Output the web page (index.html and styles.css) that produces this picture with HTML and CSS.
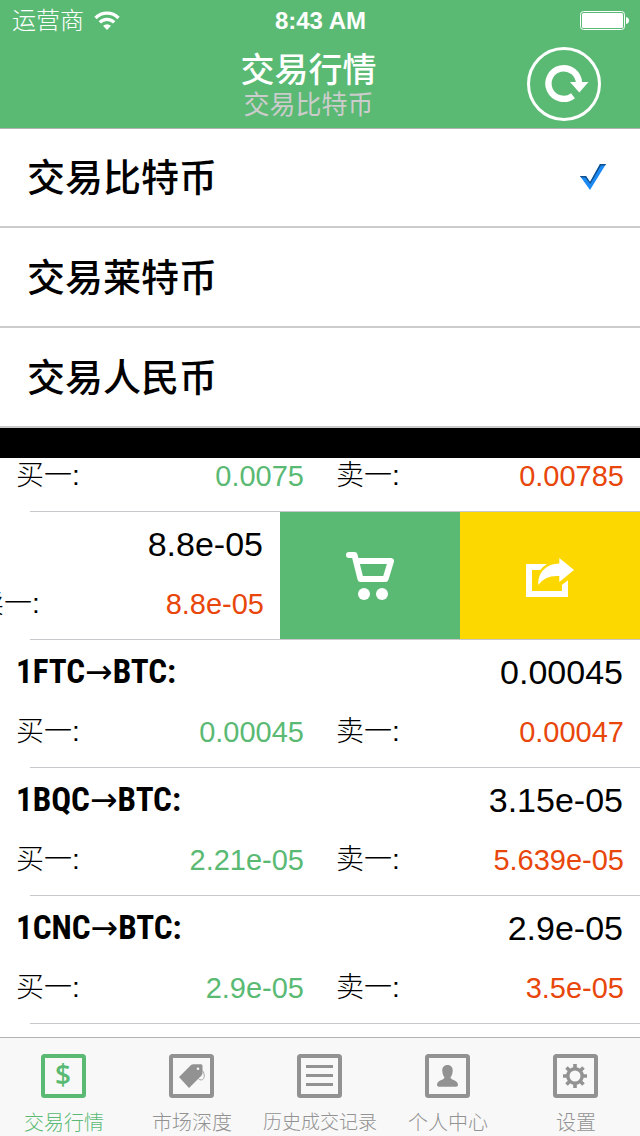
FILE: index.html
```html
<!DOCTYPE html>
<html lang="zh-CN">
<head>
<meta charset="utf-8">
<meta name="viewport" content="width=device-width, initial-scale=1">
<title>交易行情</title>
<link rel="stylesheet" href="styles.css">
</head>
<body>
<header class="header">
  <div class="status">
    <div class="carrier">
      <span>运营商</span>
      <svg class="wifi" viewBox="0 0 26 20" aria-hidden="true">
        <path d="M1.5 7A16 16 0 0 1 24.5 7M5.8 11.4A10 10 0 0 1 20.200 11.400" fill="none" stroke="currentColor" stroke-width="3.300"/>
        <path d="M9 14.800Q13 11.500 17 14.800L13 19Z" fill="currentColor"/>
      </svg>
    </div>
    <span class="clock">8:43 AM</span>
    <svg class="battery" viewBox="0 0 49 19" aria-hidden="true">
      <rect x=".5" y=".5" width="44" height="18" rx="3" fill="none" stroke="currentColor"/>
      <rect x="2" y="2" width="41" height="15" rx="1.500" fill="currentColor"/>
      <path d="M46 6Q49 6.500 49 9.500T46 13Z" fill="currentColor"/>
    </svg>
  </div>
  <div class="nav">
    <div class="titles">
      <h1 class="title">交易行情</h1>
      <p class="subtitle">交易比特币</p>
    </div>
    <button class="refresh" type="button" aria-label="刷新">
      <svg viewBox="0 0 74 74" aria-hidden="true">
        <circle cx="37" cy="37" r="35.500" fill="none" stroke="currentColor" stroke-width="3"/>
        <path d="M46 48.700A15.300 15.300 0 1 1 52 36.500" fill="none" stroke="currentColor" stroke-width="6.400"/>
        <path d="M43 35H61.500L52.300 45.500Z" fill="currentColor"/>
      </svg>
    </button>
  </div>
</header>

<nav class="menu">
  <button class="option" type="button" aria-pressed="true">
    <span>交易比特币</span>
    <svg class="check" viewBox="0 0 26 26" aria-hidden="true">
      <path d="M0 12H6L10 18 20 0H26L10 26Z" fill="#1b8af5"/>
      <path d="M0 12H6L10 18 20 0H26L25 1.600H21L10.300 20 5.300 13.500H1Z" fill="#124f8c"/>
    </svg>
  </button>
  <button class="option" type="button" aria-pressed="false"><span>交易莱特币</span></button>
  <button class="option" type="button" aria-pressed="false"><span>交易人民币</span></button>
</nav>

<main class="market">
  <ul class="ticks">
    <li class="tick">
      <div class="quotes">
        <div class="quote"><span>买一:</span><span class="buy">0.0075</span></div>
        <div class="quote"><span>卖一:</span><span class="sell">0.00785</span></div>
      </div>
    </li>
    <li class="tick">
      <div class="swipe">
        <div class="card">
          <div class="pair"><span class="price">8.8e-05</span></div>
          <div class="quotes">
            <div class="quote"></div>
            <div class="quote"><span>卖一:</span><span class="sell">8.8e-05</span></div>
          </div>
        </div>
        <button class="action cart" type="button" aria-label="购买">
          <svg viewBox="0 0 48 48" aria-hidden="true">
            <path d="M3 3H8.500L14.500 27H39.500L45 9H10.500" fill="none" stroke="currentColor" stroke-width="6" stroke-linecap="round" stroke-linejoin="round"/>
            <circle cx="18" cy="42" r="6" fill="currentColor"/>
            <circle cx="36" cy="42" r="6" fill="currentColor"/>
          </svg>
        </button>
        <button class="action share" type="button" aria-label="分享">
          <svg viewBox="0 -6 48 48" aria-hidden="true">
            <path d="M21 6H0V39H42V22.300L36 26.700V33H6V12H14.300Q17 8.500 21 6Z" fill="currentColor"/>
            <path d="M33.300 0L48 12 33.300 24V18Q19 17 12.300 27C11.500 15 20 5.700 33.300 5.500Z" fill="currentColor"/>
          </svg>
        </button>
      </div>
    </li>
    <li class="tick">
      <div class="card">
        <div class="pair"><h2 class="name">1FTC<span class="arrow">→</span>BTC:</h2><span class="price">0.00045</span></div>
        <div class="quotes">
          <div class="quote"><span>买一:</span><span class="buy">0.00045</span></div>
          <div class="quote"><span>卖一:</span><span class="sell">0.00047</span></div>
        </div>
      </div>
    </li>
    <li class="tick">
      <div class="card">
        <div class="pair"><h2 class="name">1BQC<span class="arrow">→</span>BTC:</h2><span class="price">3.15e-05</span></div>
        <div class="quotes">
          <div class="quote"><span>买一:</span><span class="buy">2.21e-05</span></div>
          <div class="quote"><span>卖一:</span><span class="sell">5.639e-05</span></div>
        </div>
      </div>
    </li>
    <li class="tick">
      <div class="card">
        <div class="pair"><h2 class="name">1CNC<span class="arrow">→</span>BTC:</h2><span class="price">2.9e-05</span></div>
        <div class="quotes">
          <div class="quote"><span>买一:</span><span class="buy">2.9e-05</span></div>
          <div class="quote"><span>卖一:</span><span class="sell">3.5e-05</span></div>
        </div>
      </div>
    </li>
  </ul>
</main>

<nav class="tabs">
  <button class="tab active" type="button">
    <svg class="icon" viewBox="0 0 46 44" aria-hidden="true">
      <rect x="2" y="2" width="41" height="40" rx="1.500" fill="none" stroke="currentColor" stroke-width="4"/>
      <text class="dollar" x="22" y="31" text-anchor="middle" fill="currentColor">$</text>
    </svg>
    <span>交易行情</span>
  </button>
  <button class="tab" type="button">
    <svg class="icon" viewBox="0 0 46 44" aria-hidden="true">
      <rect x="2" y="2" width="41" height="40" rx="1.500" fill="none" stroke="currentColor" stroke-width="4"/>
      <path fill-rule="evenodd" d="M10 23L22 11Q23 10.300 24.500 10.300H32Q33.500 10.300 33.500 12V19Q33.500 20.500 32.500 21.500L20 34ZM29 13.500A1.300 1.300 0 1 0 29 16.100A1.300 1.300 0 1 0 29 13.500Z" fill="currentColor"/>
      <path d="M33.500 16.500C36 20 36 25 32.500 26Q30 26 29.500 24.500" fill="none" stroke="currentColor" stroke-width=".8"/>
    </svg>
    <span>市场深度</span>
  </button>
  <button class="tab" type="button">
    <svg class="icon" viewBox="0 0 46 44" aria-hidden="true">
      <rect x="2" y="2" width="41" height="40" rx="1.500" fill="none" stroke="currentColor" stroke-width="4"/>
      <path d="M9 12.500H36M9 21.500H36M9 30.500H36" stroke="currentColor" stroke-width="3"/>
    </svg>
    <span class="long">历史成交记录</span>
  </button>
  <button class="tab" type="button">
    <svg class="icon" viewBox="0 0 46 44" aria-hidden="true">
      <rect x="2" y="2" width="41" height="40" rx="1.500" fill="none" stroke="currentColor" stroke-width="4"/>
      <path d="M22.500 11C26 11 28 13.500 27.700 17C27.500 20.500 26.500 22 25.500 23.500C25.500 26 33 26 33 31Q33 32.800 30 32.800H15Q12 32.800 12 31C12 26 19.500 26 19.500 23.500C18.500 22 17.500 20.500 17.300 17C17 13.500 19 11 22.500 11Z" fill="currentColor"/>
    </svg>
    <span>个人中心</span>
  </button>
  <button class="tab" type="button">
    <svg class="icon" viewBox="0 0 46 44" aria-hidden="true">
      <rect x="2" y="2" width="41" height="40" rx="1.500" fill="none" stroke="currentColor" stroke-width="4"/>
      <circle cx="22" cy="22" r="7.200" fill="none" stroke="currentColor" stroke-width="3.400"/>
      <path d="M22 10V14M22 30V34M10 22H14M30 22H34M13.500 13.500L16.500 16.500M27.500 27.500L30.500 30.500M30.500 13.500L27.500 16.500M16.500 27.500L13.500 30.500" stroke="currentColor" stroke-width="3.600"/>
    </svg>
    <span>设置</span>
  </button>
</nav>
</body>
</html>
```

FILE: styles.css
```css
* {
  box-sizing: border-box;
}

body {
  margin: 0;
  min-height: 100vh;
  display: flex;
  flex-direction: column;
  overflow-x: hidden;
  background: #fff;
  color: #000;
  font-family: "Liberation Sans", "Noto Sans CJK SC", sans-serif;
}

h1, h2, p, ul {
  margin: 0;
  padding: 0;
}

button {
  margin: 0;
  padding: 0;
  border: 0;
  border-radius: 0;
  background: none;
  color: inherit;
  font: inherit;
}

svg {
  display: block;
}

.header {
  background: #5aba74;
  color: #fff;
}

.status {
  height: 40px;
  padding: 0 11px 0 12px;
  display: grid;
  grid-template-columns: 1fr auto 1fr;
  align-items: center;
  font-size: 24px;
  line-height: 40px;
}

.carrier {
  padding-top: 1px;
  display: flex;
  align-items: center;
  gap: 10px;
  font-weight: 300;
}

.wifi {
  width: 26px;
  height: 20px;
}

.clock {
  font-weight: 700;
}

.battery {
  width: 49px;
  height: 19px;
  justify-self: end;
}

.nav {
  height: 88px;
  padding: 0 39px 0 16px;
  display: grid;
  grid-template-columns: 1fr auto 1fr;
  align-items: center;
}

.titles {
  padding-top: 2px;
  grid-column: 2;
  text-align: center;
}

.title {
  font-size: 34px;
  line-height: 40px;
  font-weight: 500;
}

.subtitle {
  color: #ccc;
  font-size: 26px;
  line-height: 30px;
}

.refresh {
  width: 74px;
  height: 74px;
  justify-self: end;
}

.menu {
  display: flex;
  flex-direction: column;
  box-shadow: inset 0 1px #b2b2b2;
  border-bottom: 30px solid #000;
}

.option {
  padding: 20px 34px 20px 27px;
  display: flex;
  justify-content: space-between;
  align-items: center;
  border-bottom: 2px solid #ccc;
  font-size: 38px;
  line-height: 56px;
  font-weight: 500;
}

.option span {
  padding-top: 2px;
}

.check {
  width: 26px;
  height: 26px;
}

.market {
  flex: 1;
  overflow: hidden;
}

.ticks {
  list-style: none;
}

.tick::after {
  content: "";
  display: block;
  height: 1px;
  margin-left: 30px;
  background: #c8c7cc;
}

.card {
  padding-top: 12px;
}

.pair {
  padding: 0 17px 22px 16px;
  display: flex;
  align-items: center;
  font-size: 34px;
  line-height: 40px;
}

.name {
  font-family: "Roboto Condensed", "Liberation Sans", sans-serif;
  font-size: 33px;
  font-weight: 700;
}

.arrow {
  font-family: "DejaVu Sans", sans-serif;
  font-weight: 400;
}

.price {
  margin-left: auto;
}

.quotes {
  padding: 1px 0 18px;
  display: grid;
  grid-template-columns: 1fr 1fr;
  font-size: 28px;
  line-height: 34px;
  font-weight: 300;
}

.quote {
  height: 34px;
  padding: 0 16px;
  display: flex;
  justify-content: space-between;
}

.buy,
.sell {
  font-size: 29px;
}

.buy {
  color: #5aba74;
}

.sell {
  color: #e8460a;
}

.swipe {
  display: flex;
  justify-content: flex-end;
}

.swipe .card {
  flex: 0 0 100%;
}

.action {
  flex: 0 0 180px;
  display: flex;
  justify-content: center;
  align-items: center;
  color: #fff;
}

.action svg {
  width: 48px;
  height: 48px;
}

.cart {
  background: #5aba74;
}

.share {
  background: #fcd700;
}

.tabs {
  display: grid;
  grid-template-columns: repeat(5, 1fr);
  border-top: 1px solid #b2b2b2;
  background: #f8f8f8;
}

.tab {
  padding-top: 16px;
  display: flex;
  flex-direction: column;
  align-items: center;
  gap: 12px;
  color: #929292;
  font-size: 20px;
  line-height: 26px;
  font-weight: 300;
  white-space: nowrap;
}

.tab.active {
  color: #5aba74;
}

.long {
  font-size: 19px;
}

.icon {
  width: 46px;
  height: 44px;
}

.dollar {
  font-family: "Open Sans", "Noto Sans", sans-serif;
  font-size: 28px;
  font-weight: 600;
}
```
